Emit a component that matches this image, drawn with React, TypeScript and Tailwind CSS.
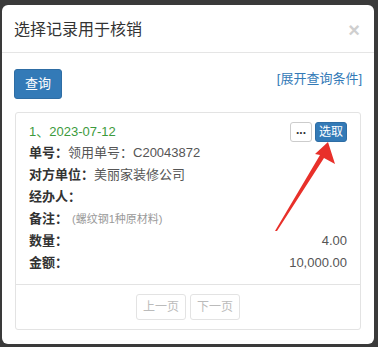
import React from 'react';

const rows = [
  { label: '单号：', value: '领用单号：C20043872' },
  { label: '对方单位：', value: '美丽家装修公司' },
  { label: '经办人：', value: '' },
];

export default function App() {
  return (
    <div
      className="w-[378px] h-[347px] bg-[#3a3a3a] pt-[5px] pl-[2px] relative overflow-hidden"
      style={{ fontFamily: '"Liberation Sans", "Noto Sans CJK SC", sans-serif' }}
    >
      <div className="w-[372px] h-[339px] bg-white rounded-[6px] flex flex-col">
        {/* header */}
        <div className="h-[48px] border-b border-[#e5e5e5] flex items-center justify-between pl-[12px] pr-[14px] pt-[2px]">
          <h4 className="text-[16px] text-[#333] leading-none">选择记录用于核销</h4>
          <span className="text-[20px] font-bold text-[#cfcfcf] leading-none">×</span>
        </div>

        {/* body */}
        <div className="px-[12px] pt-[16px]">
          <div className="flex items-center justify-between">
            <button className="w-[48px] h-[30px] bg-[#337ab7] border border-[#2e6da4] rounded-[3px] text-white text-[13px]">
              查询
            </button>
            <a className="text-[13px] text-[#337ab7] -mt-[11px]">[展开查询条件]</a>
          </div>

          <div className="mt-[13px] border border-[#e3e3e3] rounded-[3px] mx-[1px]">
            <div className="pl-[13px] pr-[13px] pt-[8px] pb-[10px]">
              <div className="flex items-center justify-between h-[21px]">
                <span className="text-[13px] text-[#3c9a3c]">1、2023-07-12</span>
                <div className="flex items-center gap-[3px]">
                  <button className="w-[22px] h-[20px] border border-[#ccc] rounded-[3px] bg-white text-[#333] text-[12px] font-bold leading-none flex items-center justify-center pb-[4px]">
                    ...
                  </button>
                  <button className="w-[32px] h-[20px] bg-[#337ab7] border border-[#2e6da4] rounded-[3px] text-white text-[12px] leading-none">
                    选取
                  </button>
                </div>
              </div>
              {rows.map((r) => (
                <div key={r.label} className="h-[22px] flex items-center text-[13px]">
                  <span className="font-bold text-[#333]">{r.label}</span>
                  <span className="text-[#555]">{r.value}</span>
                </div>
              ))}
              <div className="h-[22px] flex items-center text-[13px]">
                <span className="font-bold text-[#333]">备注：</span>
                <span className="text-[11px] text-[#999] ml-[4px]">(螺纹钢1种原材料)</span>
              </div>
              <div className="h-[22px] flex items-center justify-between text-[13px]">
                <span className="font-bold text-[#333]">数量：</span>
                <span className="text-[#555]">4.00</span>
              </div>
              <div className="h-[22px] flex items-center justify-between text-[13px]">
                <span className="font-bold text-[#333]">金额：</span>
                <span className="text-[#555]">10,000.00</span>
              </div>
            </div>
            <div className="border-t border-[#e3e3e3] flex justify-center gap-[4px] pt-[9px] pb-[9px]">
              <button className="w-[50px] h-[26px] border border-[#e3e3e3] rounded-[3px] text-[12px] text-[#bbb]">上一页</button>
              <button className="w-[50px] h-[26px] border border-[#e3e3e3] rounded-[3px] text-[12px] text-[#bbb]">下一页</button>
            </div>
          </div>
        </div>
      </div>

      {/* red annotation arrow */}
      <svg className="absolute left-0 top-0" width="378" height="347" viewBox="0 0 378 347">
        <path d="M275 231 L277 231 L324 158 L335 164 L328 142 L315 154 L320 155 Z" fill="#e8302a" />
      </svg>
    </div>
  );
}
